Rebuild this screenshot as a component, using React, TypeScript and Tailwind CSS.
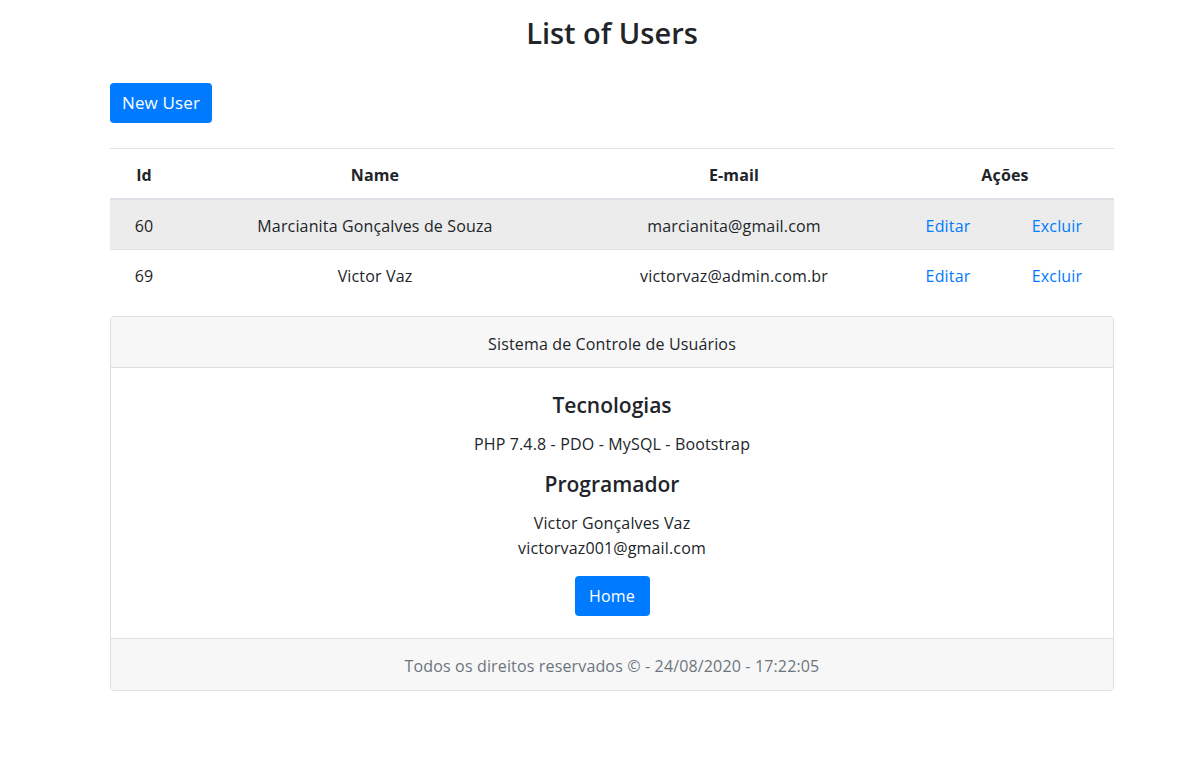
import React from "react";

const users = [
  { id: 60, name: "Marcianita Gonçalves de Souza", email: "marcianita@gmail.com" },
  { id: 69, name: "Victor Vaz", email: "victorvaz@admin.com.br" },
];

export default function App() {
  return (
    <div
      className="min-h-[763px] bg-white text-[#212529] text-[16px] leading-[24px] tracking-[0.15px]"
      style={{ fontFamily: '"Open Sans", "Noto Sans", sans-serif' }}
    >
      <div className="ml-[110px] w-[1004px] pt-[14px]">
        <h2 className="text-center text-[29px] leading-[38px] font-semibold tracking-normal">List of Users</h2>
        <div className="mt-[31px]">
          <button className="h-[40px] w-[102px] rounded-[4px] bg-[#007bff] text-white text-[17px]">
            New User
          </button>
        </div>

        <div className="mt-[25px]">
          <div className="grid grid-cols-[68px_394px_324px_104px_114px] border-t border-[#dee2e6] h-[52px] pt-[2px] items-center font-bold text-center border-b-2">
            <div>Id</div>
            <div>Name</div>
            <div>E-mail</div>
            <div className="col-span-2">Ações</div>
          </div>
          {users.map((u, i) => (
            <div
              key={u.id}
              className={`grid grid-cols-[68px_394px_324px_104px_114px] h-[50px] pt-[2px] items-center text-center ${
                i === 0 ? "bg-[#ececec] border-b border-[#dee2e6]" : ""
              }`}
            >
              <div>{u.id}</div>
              <div>{u.name}</div>
              <div>{u.email}</div>
              <div className="text-[#007bff]">Editar</div>
              <div className="text-[#007bff]">Excluir</div>
            </div>
          ))}
        </div>

        <div className="mt-[16px] rounded-[4px] border border-[#dfdfdf] overflow-hidden">
          <div className="h-[51px] pt-[3px] bg-[#f7f7f7] border-b border-[#dfdfdf] flex items-center justify-center">
            Sistema de Controle de Usuários
          </div>
          <div className="flex flex-col items-center pt-[23px] pb-[22px]">
            <h4 className="text-[21px] leading-[29px] font-semibold tracking-normal">Tecnologias</h4>
            <p className="mt-[12px]">PHP 7.4.8 - PDO - MySQL - Bootstrap</p>
            <h4 className="mt-[14px] text-[21px] leading-[29px] font-semibold tracking-normal">Programador</h4>
            <p className="mt-[12px] leading-[25px]">Victor Gonçalves Vaz</p>
            <p className="leading-[25px]">victorvaz001@gmail.com</p>
            <button className="mt-[15px] h-[40px] w-[75px] rounded-[4px] bg-[#007bff] text-white">Home</button>
          </div>
          <div className="h-[52px] pt-[3px] bg-[#f7f7f7] border-t border-[#dfdfdf] flex items-center justify-center text-[#6c757d]">
            Todos os direitos reservados © - 24/08/2020 - 17:22:05
          </div>
        </div>
      </div>
    </div>
  );
}
